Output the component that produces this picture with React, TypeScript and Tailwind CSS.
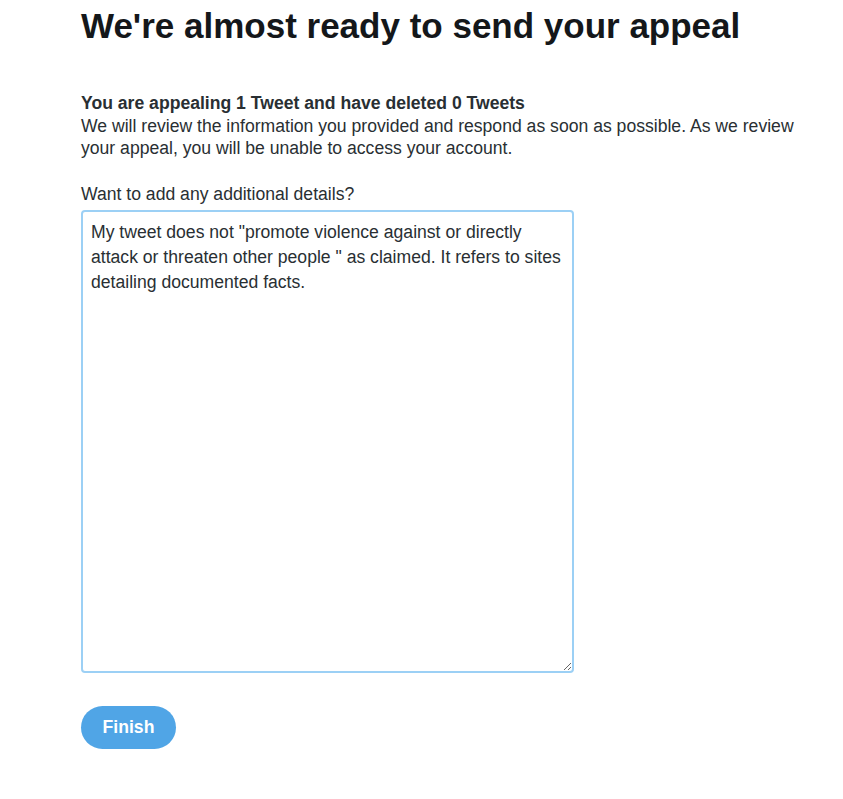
import React from "react";

export default function App() {
  const text =
    'My tweet does not "promote violence against or directly attack or threaten other people " as claimed. It refers to sites detailing documented facts.';
  return (
    <div
      className="min-h-[799px] w-full bg-white text-[#14171a]"
      style={{ fontFamily: '"Liberation Sans", Arial, sans-serif' }}
    >
      <div className="pl-[81px] pr-[40px]">
        <h1 className="pt-[5px] text-[35px] font-bold leading-[42px] text-[#14171a]">
          We're almost ready to send your appeal
        </h1>
        <div className="mt-[44px]">
          <p className="text-[17.6px] font-bold leading-[24px] text-[#292f33]">
            You are appealing 1 Tweet and have deleted 0 Tweets
          </p>
          <p className="text-[17.6px] leading-[22px] text-[#292f33]">
            We will review the information you provided and respond as soon as possible. As we review your appeal, you will be unable to access your account.
          </p>
        </div>
        <p className="mt-[24px] text-[17.6px] leading-[22px] text-[#292f33]">
          Want to add any additional details?
        </p>
        <textarea
          className="mt-[5px] block h-[463px] w-[493px] resize-y rounded-[4px] border-2 border-[#9cd0f5] px-[8px] py-[8px] text-[17.6px] leading-[25px] text-[#292f33] outline-none"
          style={{ fontFamily: '"Liberation Sans", Arial, sans-serif' }}
          defaultValue={text}
        />
        <button className="mt-[33px] h-[43px] w-[95px] rounded-full bg-[#50a5e6] text-[17.6px] font-bold text-white">
          Finish
        </button>
      </div>
    </div>
  );
}
